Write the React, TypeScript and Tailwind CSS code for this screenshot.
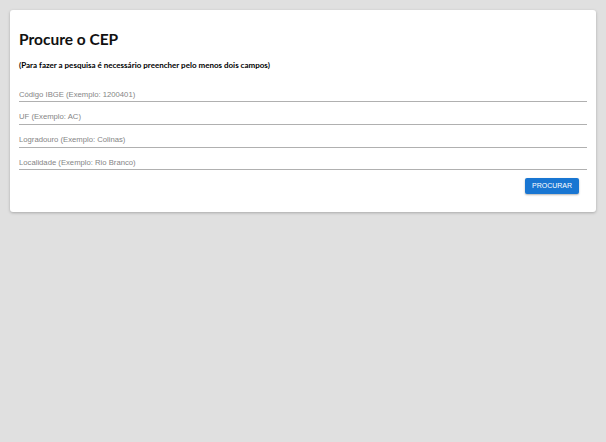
const fields = [
    'Código IBGE (Exemplo: 1200401)',
    'UF (Exemplo: AC)',
    'Logradouro (Exemplo: Colinas)',
    'Localidade (Exemplo: Rio Branco)',
];

export default function App() {
    return (
        <div className="min-h-[442px] bg-[#e0e0e0] p-[10px]">
            <div className="rounded-[3px] bg-white px-[9px] pt-[19px] pb-[18px] shadow-[0_1px_3px_rgba(0,0,0,0.25)]">
                <h1 className="font-['Lato',sans-serif] text-[15.5px] font-bold leading-[20px] text-[#111]">
                    Procure o CEP
                </h1>
                <p className="mt-[10px] font-['Lato',sans-serif] text-[8px] font-bold leading-[12px] text-black">
                    (Para fazer a pesquisa é necessário preencher pelo menos dois campos)
                </p>
                <div className="mt-[17px] flex flex-col gap-[8.8px]">
                    {fields.map((f) => (
                        <input
                            key={f}
                            placeholder={f}
                            className="h-[14px] w-full border-b border-[#b0b0b0] pb-[1px] font-['Liberation_Sans',Arial,sans-serif] text-[7.7px] outline-none placeholder:text-[#858585]"
                        />
                    ))}
                </div>
                <div className="mt-[8px] flex justify-end pr-[8px]">
                    <button
                        type="button"
                        className="h-[16px] w-[54px] rounded-[2px] bg-[#1976d2] font-['Liberation_Sans',Arial,sans-serif] text-[7px] text-white shadow-[0_1px_2px_rgba(0,0,0,0.3)]"
                    >
                        PROCURAR
                    </button>
                </div>
            </div>
        </div>
    );
}
